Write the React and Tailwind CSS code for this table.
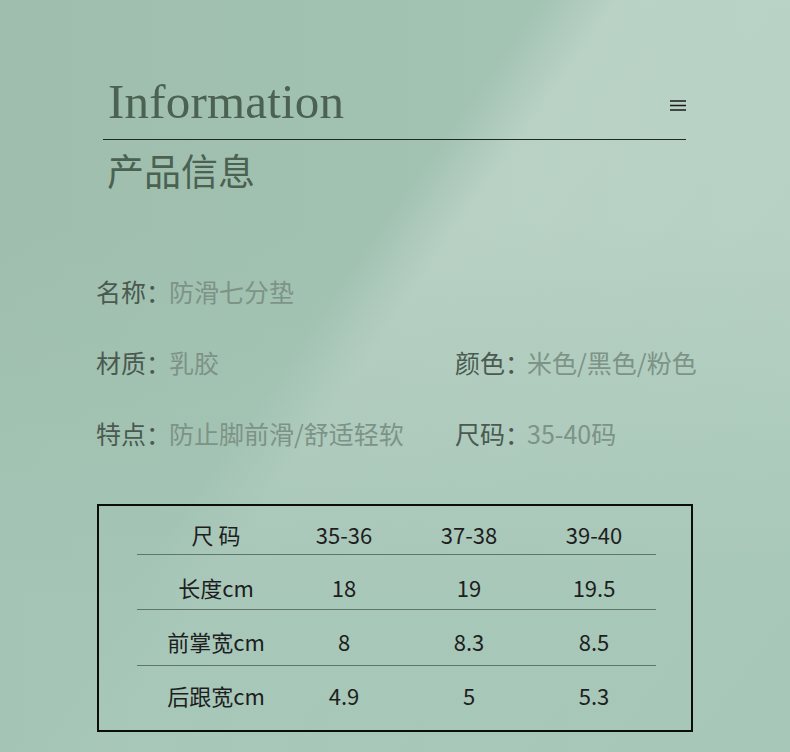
import React from 'react';

const info = [
  [{ label: '名称', value: '防滑七分垫', colon: 'tracking-[-2px]' }],
  [{ label: '材质', value: '乳胶', colon: 'tracking-[-2px]' }, { label: '颜色', value: '米色/黑色/粉色', colon: 'tracking-[-3px]' }],
  [{ label: '特点', value: '防止脚前滑/舒适轻软', colon: 'tracking-[-2px]' }, { label: '尺码', value: '35-40码', colon: 'tracking-[-3px]' }]
];

const rows = [
  { cells: ['尺 码', '35-36', '37-38', '39-40'], cls: 'h-[49px] pt-[8px] border-b border-[#5f7668]' },
  { cells: ['长度cm', '18', '19', '19.5'], cls: 'h-[55px] pt-[10px] border-b border-[#5f7668]' },
  { cells: ['前掌宽cm', '8', '8.3', '8.5'], cls: 'h-[56px] pt-[8px] border-b border-[#5f7668]' },
  { cells: ['后跟宽cm', '4.9', '5', '5.3'], cls: 'h-[64px] pb-[6px]' }
];

export default function App() {
  return (
    <div className="w-[790px] h-[752px] overflow-hidden bg-[linear-gradient(180deg,rgba(165,198,183,0)_30%,rgba(165,198,183,0.85)_80%),linear-gradient(125deg,rgba(255,255,255,0)_41%,rgba(255,255,255,0.24)_47%,rgba(255,255,255,0.16)_100%),linear-gradient(90deg,#9fbead,#a5c6b6)] font-['Noto_Sans_CJK_SC',sans-serif]">
      <div className="pt-[76px] ml-[103px] w-[583px]">
        <div className="flex items-end justify-between border-b border-[#1f2a22] pb-[11px]">
          <h1 className="pl-[5px] font-['Liberation_Serif',serif] text-[49px] leading-[52px] text-[#4b6152] tracking-[0.2px]">
            Information
          </h1>
          <svg width="16" height="12" viewBox="0 0 16 12" className="mb-[16px]">
            <path d="M0 1h16M0 5.5h16M0 10h16" stroke="#1a1a1a" strokeWidth="1.4" />
          </svg>
        </div>
        <h2 className="pl-[4px] pt-[7px] text-[37px] leading-[46px] text-[#4b6152]">
          产品信息
        </h2>
      </div>

      <div className="ml-[96px] mt-[81px] flex flex-col gap-[36px] text-[25px] leading-[35px]">
        {info.map((line, i) => (
          <div key={i} className="flex">
            {line.map((item, j) => (
              <div key={j} className={j === 0 ? 'w-[359px] whitespace-nowrap' : 'whitespace-nowrap'}>
                <span className="text-[#4a5a50]">{item.label}</span>
                <span className={`text-[#4a5a50] ${item.colon}`}>：</span>
                <span className="text-[#7d9387]">{item.value}</span>
              </div>
            ))}
          </div>
        ))}
      </div>

      <div className="ml-[97px] mt-[53px] w-[596px] border-2 border-[#0d0d0d]">
        <div className="ml-[38px] w-[519px] text-[22px] text-[#1e1e1e]">
          {rows.map((row, i) => (
            <div key={i} className={`flex items-center ${row.cls}`}>
              <div className="w-[158px] text-center">{row.cells[0]}</div>
              <div className="w-[98px] text-center">{row.cells[1]}</div>
              <div className="w-[152px] text-center">{row.cells[2]}</div>
              <div className="w-[98px] text-center">{row.cells[3]}</div>
            </div>
          ))}
        </div>
      </div>
    </div>
  );
}
